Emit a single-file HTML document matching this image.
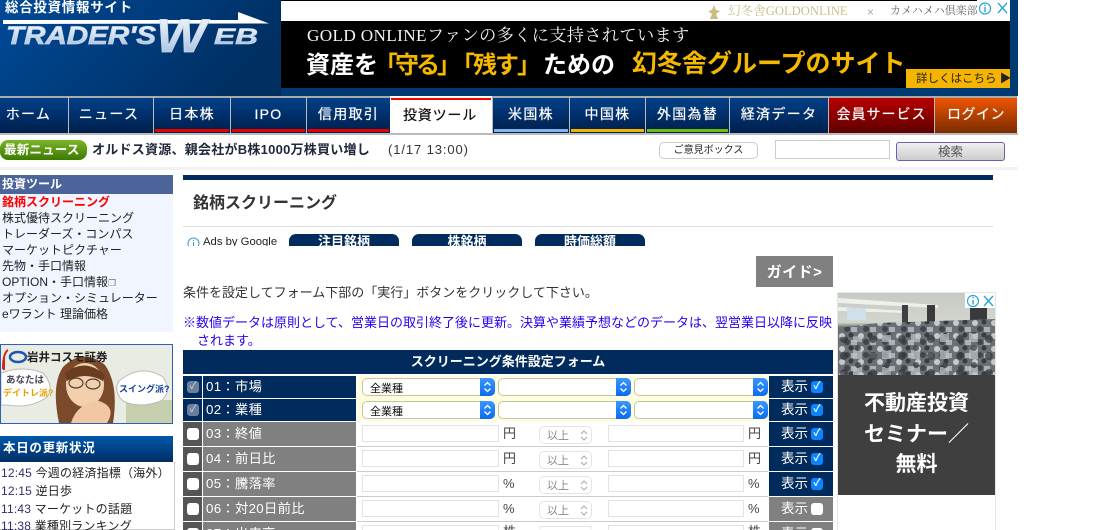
<!DOCTYPE html>
<html lang="ja"><head><meta charset="utf-8"><title>銘柄スクリーニング</title>
<style>
html,body{margin:0;padding:0;background:#fff;width:1095px;height:530px;overflow:hidden}
body{position:relative;font-family:"Liberation Sans","Noto Sans CJK JP",sans-serif;color:#222;font-size:12px}
div,span{position:absolute;white-space:nowrap;box-sizing:border-box}
.nav{top:96px;height:37px;background:linear-gradient(#004088,#001f4c);border-left:1px solid #bbb;border-top:2px solid #aaa;color:#fff;font-size:14px;text-align:center;line-height:32px;letter-spacing:1.3px;text-shadow:0 0 .6px #fff}
.nav i{position:absolute;left:1px;right:1px;bottom:1px;height:3px;display:block}
.side{left:2px;font-size:12px;line-height:16px;color:#222}
.navy{background:#002b5c;color:#fff}
.gray{background:#808080;color:#fff}
.cb{left:183px;width:19px;text-align:center}
.lab{left:203px;width:153px;font-size:13.3px;padding-left:3px;letter-spacing:.3px;padding-top:1px}
.sh{left:769px;width:64px;font-size:13.5px;padding-left:12px;padding-top:1px}
.box{width:12px;height:12px;border-radius:3px;background:#fff}
.chk{left:811px;width:12px;height:12px;border-radius:3px;background:#0a84ff;color:#fff;font-size:10px;line-height:12px;text-align:center;font-weight:bold}
.sel{height:18px;background:#fff;border:1px solid #c8c49a;border-radius:5px;font-size:11px;line-height:20px;padding-left:7px;color:#111}
.sel b{position:absolute;right:-1px;top:-1px;width:15px;height:18px;background:linear-gradient(#3a97ff,#0a6cf0);border-radius:0 5px 5px 0;display:block}
.sel svg,.up svg{position:absolute;left:0;top:0}
.inp{height:17px;background:#fff;border:1px solid #e2e2e2}
.u{font-size:13px;color:#444}
.up{width:53px;height:18px;border:1px solid #e4e4e4;border-radius:5px;font-size:11px;color:#888;line-height:19px;padding-left:7px;background:#fff}
.up svg{left:38px}
.tb{top:234px;height:12px;width:110px;background:#002b5c;border-radius:7px 7px 0 0;color:#fff;font-size:13px;font-weight:bold;text-align:center;overflow:hidden;line-height:15px}
.upd{left:1px;font-size:12px;line-height:16px;color:#222;letter-spacing:.2px}
.upd em{font-style:normal;color:#303068}
</style></head><body>

<!-- header -->
<div style="left:0;top:0;width:1018px;height:96px;background:#003a72"></div>
<div style="left:0;top:0;width:281px;height:96px;background:linear-gradient(135deg,#004a98,#002f62 85%)"></div>
<div style="left:5px;top:-2px;font-size:13.5px;font-weight:bold;color:#fff;letter-spacing:.7px;line-height:20px">総合投資情報サイト</div>
<svg style="position:absolute;left:0;top:0" width="280" height="60">
<defs><linearGradient id="lg" x1="0" y1="0" x2="0" y2="1"><stop offset="0" stop-color="#fff"/><stop offset="1" stop-color="#9db8dd"/></linearGradient></defs>
<path d="M3 20H238V12L269 23.5L3 24Z" fill="#fff"/>
<text x="6" y="44" font-family="Liberation Sans" font-size="25" font-weight="bold" font-style="italic" fill="url(#lg)" stroke="#c6d6ec" stroke-width=".8" textLength="150" lengthAdjust="spacingAndGlyphs">TRADER'S</text>
<text x="156" y="52" font-family="Liberation Sans" font-size="47" font-weight="bold" font-style="italic" fill="url(#lg)" stroke="#c6d6ec" stroke-width=".8" textLength="50" lengthAdjust="spacingAndGlyphs">W</text>
<text x="214" y="44" font-family="Liberation Sans" font-size="22" font-weight="bold" font-style="italic" fill="url(#lg)" stroke="#c6d6ec" stroke-width=".6" textLength="44" lengthAdjust="spacingAndGlyphs">EB</text>
</svg>

<!-- top ad -->
<div style="left:281px;top:0;width:729px;height:88px;background:#000"></div>
<div style="left:281px;top:1px;width:729px;height:20px;background:#fff"></div>
<svg style="position:absolute;left:705px;top:4px" width="18" height="18"><path d="M9 1L11 6L15 7L11 10L13 15H5L7 10L3 7L7 6Z" fill="#c8bd82"/></svg>
<div style="left:728px;top:3px;font-size:12.6px;line-height:16px;color:#c9c08c;font-family:'Liberation Serif','Noto Serif CJK SC',serif">幻冬舎GOLDONLINE</div>
<div style="left:867px;top:4px;font-size:12px;line-height:16px;color:#aaa">×</div>
<div style="left:890px;top:4px;font-size:11px;line-height:15px;color:#666;font-family:'Liberation Serif','Noto Serif CJK SC',serif">カメハメハ倶楽部</div>
<div style="left:977px;top:0;width:33px;height:16px;background:#fff"></div>
<svg style="position:absolute;left:978px;top:1px" width="32" height="15"><circle cx="7" cy="7.5" r="5.5" fill="none" stroke="#2aa6dd" stroke-width="1.2"/><path d="M7 6V11M7 3.500V5" stroke="#2aa6dd" stroke-width="1.4"/><path d="M20 2L29 12M29 2L20 12" stroke="#2aa6dd" stroke-width="1.4"/></svg>
<div style="left:307px;top:25px;font-size:17.2px;line-height:22px;color:#f4f4f4;font-family:'Liberation Serif','Noto Serif CJK SC',serif;letter-spacing:.35px">GOLD ONLINEファンの多くに支持されています</div>
<div style="left:306px;top:50px;font-size:24px;line-height:32px;font-weight:bold;color:#fff">資産を</div>
<div style="left:374px;top:50px;font-size:24px;line-height:32px;font-weight:bold;color:#f5b800;letter-spacing:-3px">「守る」</div>
<div style="left:451px;top:50px;font-size:24px;line-height:32px;font-weight:bold;color:#f5b800;letter-spacing:-2px">「残す」</div>
<div style="left:543px;top:50px;font-size:24px;line-height:32px;font-weight:bold;color:#fff">ための</div>
<div style="left:632px;top:47px;font-size:25px;line-height:34px;font-weight:bold;color:#f5b800">幻冬舎グループのサイト</div>
<div style="left:906px;top:69px;width:104px;height:19px;background:#f5b400;color:#222;font-size:11.5px;line-height:20px;padding-left:10px">詳しくはこちら ▶</div>

<!-- nav -->
<div style="left:0;top:133px;width:1018px;height:2px;background:#bbb"></div>
<div class="nav" style="left:0;width:68px;border-left:0;padding-right:11px">ホーム</div>
<div class="nav" style="left:68px;width:85px;padding-right:4px">ニュース</div>
<div class="nav" style="left:153px;width:77px">日本株<i style="background:#e60000"></i></div>
<div class="nav" style="left:230px;width:76px">IPO<i style="background:#e60000"></i></div>
<div class="nav" style="left:306px;width:84px">信用取引<i style="background:#e60000"></i></div>
<div style="left:391px;top:98px;width:100px;height:2px;background:#f00"></div>
<div style="left:390px;top:104px;width:100px;text-align:center;font-size:14px;line-height:22px;color:#111;letter-spacing:.8px;text-shadow:0 0 .5px #111">投資ツール</div>
<div class="nav" style="left:492px;width:77px">米国株<i style="background:#7db7ee"></i></div>
<div class="nav" style="left:569px;width:76px">中国株<i style="background:#f3b400"></i></div>
<div class="nav" style="left:645px;width:84px">外国為替<i style="background:#6fbe10"></i></div>
<div class="nav" style="left:729px;width:99px">経済データ</div>
<div class="nav" style="left:828px;width:106px;background:linear-gradient(#b80000,#5e0000);letter-spacing:1px">会員サービス</div>
<div class="nav" style="left:934px;width:83px;background:linear-gradient(#ee5500,#7a2c00);letter-spacing:.5px">ログイン</div>

<!-- news bar -->
<div style="left:0;top:140px;width:87px;height:20px;border-radius:8px;background:linear-gradient(#7cb52a,#3b7a00);color:#fff;font-size:12.5px;font-weight:bold;line-height:20px;padding-left:4px;letter-spacing:.2px">最新ニュース</div>
<div style="left:92px;top:140px;font-size:13px;line-height:19px;font-weight:bold;color:#20283a;letter-spacing:.25px">オルドス資源、親会社がB株1000万株買い増し</div>
<div style="left:388px;top:140px;font-size:13px;line-height:19px;color:#333;letter-spacing:.9px">(1/17 13:00)</div>
<div style="left:659px;top:142px;width:99px;height:17px;border:1px solid #ccc;border-radius:5px;font-size:10px;line-height:16px;text-align:center;color:#222;background:#fff">ご意見ボックス</div>
<div style="left:775px;top:140px;width:115px;height:19px;border:1px solid #ccc;background:#fff"></div>
<div style="left:896px;top:142px;width:109px;height:19px;border:1px solid #6a5fb0;border-radius:3px;background:linear-gradient(#f0f0f0,#ccc);font-size:12.5px;line-height:19px;text-align:center;color:#555">検索</div>
<div style="left:0;top:167px;width:1018px;height:3px;background:#f2f2f2"></div>

<!-- sidebar -->
<div style="left:0;top:175px;width:173px;height:157px;background:#f1f5ff"></div>
<div style="left:0;top:175px;width:173px;height:19px;background:#4b6499;color:#fff;font-size:12px;font-weight:bold;line-height:19px;padding-left:2px">投資ツール</div>
<div class="side" style="top:194px;color:#f00;font-weight:bold">銘柄スクリーニング</div>
<div class="side" style="top:210px">株式優待スクリーニング</div>
<div class="side" style="top:226px">トレーダーズ・コンパス</div>
<div class="side" style="top:242px">マーケットピクチャー</div>
<div class="side" style="top:258px">先物・手口情報</div>
<div class="side" style="top:274px">OPTION・手口情報<span style="position:static;font-size:9px;color:#777">❐</span></div>
<div class="side" style="top:290px">オプション・シミュレーター</div>
<div class="side" style="top:306px">eワラント 理論価格</div>

<!-- broker banner -->
<div style="left:0;top:344px;width:173px;height:80px;background:linear-gradient(#eef0ea,#dfe5d8);border:1px solid #2b62b5;overflow:hidden"></div>
<svg style="position:absolute;left:1px;top:345px" width="171" height="78">
<rect x="0" y="0" width="171" height="78" fill="#e9ece3"/>
<rect x="125" y="55" width="46" height="23" fill="#c5cfae"/>
<path d="M58 78Q50 40 62 22Q82 2 104 20Q118 40 112 78Z" fill="#7a4a2a"/>
<ellipse cx="84" cy="40" rx="19" ry="22" fill="#f4cfae"/>
<path d="M64 28Q84 12 104 30L102 36Q84 26 66 36Z" fill="#6b3d20"/>
<path d="M70 78Q76 58 98 56Q116 62 106 78Z" fill="#f2c8a4"/>
<ellipse cx="75" cy="38" rx="7" ry="5" fill="none" stroke="#443" stroke-width="1.2"/><ellipse cx="92" cy="39" rx="7" ry="5" fill="none" stroke="#443" stroke-width="1.2"/>
<path d="M0 28Q22 20 42 28Q54 42 46 52Q30 64 6 60L0 60Z" fill="#fff" stroke="#bbb"/>
<path d="M118 36Q140 18 162 32Q172 46 160 56Q138 64 122 56Q112 46 118 36Z" fill="#fff" stroke="#bbb"/>
<path d="M2 24Q2 8 7 5M3 12V25" stroke="#d8201c" stroke-width="2" fill="none"/>
<ellipse cx="17" cy="12" rx="8" ry="5" stroke="#1f55b0" stroke-width="2.500" fill="none"/>
</svg>
<div style="left:27px;top:350px;font-size:11.5px;line-height:16px;font-weight:bold;color:#222">岩井コスモ証券</div>
<div style="left:6px;top:375px;font-size:9.5px;line-height:12px;font-weight:bold;color:#445">あなたは</div>
<div style="left:3px;top:387px;font-size:9px;line-height:12px;font-weight:bold;color:#e8a000">デイトレ派?</div>
<div style="left:119px;top:383px;font-size:9px;line-height:12px;font-weight:bold;color:#14409a">スイング派?</div>

<!-- updates -->
<div style="left:0;top:436px;width:173px;height:26px;background:linear-gradient(#0058ad,#002e62);color:#fff;font-size:12.5px;font-weight:bold;line-height:24px;padding-left:3px;letter-spacing:.7px">本日の更新状況</div>
<div style="left:0;top:462px;width:175px;height:68px;border:1px solid #ccc;border-top:0;border-left:0"></div>
<div class="upd" style="top:465px"><em>12:45</em> 今週の経済指標（海外）</div>
<div class="upd" style="top:483px"><em>12:15</em> 逆日歩</div>
<div class="upd" style="top:501px"><em>11:43</em> マーケットの話題</div>
<div class="upd" style="top:518px"><em>11:38</em> 業種別ランキング</div>

<!-- main head -->
<div style="left:183px;top:175px;width:810px;height:5px;background:#002b5c"></div>
<div style="left:193px;top:193px;font-size:16px;line-height:22px;font-weight:bold;color:#333">銘柄スクリーニング</div>
<div style="left:183px;top:226px;width:810px;height:1px;background:#ddd"></div>
<svg style="position:absolute;left:187px;top:237px" width="14" height="9"><circle cx="6.5" cy="6.5" r="5.5" fill="none" stroke="#3a9bd0"/><path d="M6.500 5V9M6.500 3V4" stroke="#3a9bd0"/></svg>
<div style="left:203px;top:235px;height:11px;overflow:hidden;font-size:11.3px;line-height:14px;color:#222">Ads by Google</div>
<div class="tb" style="left:289px">注目銘柄</div>
<div class="tb" style="left:412px">株銘柄</div>
<div class="tb" style="left:535px">時価総額</div>
<div style="left:756px;top:256px;width:77px;height:31px;background:#808080;color:#fff;font-size:15px;font-weight:bold;line-height:31px;padding-top:1px;text-align:center;letter-spacing:.5px">ガイド&gt;</div>
<div style="left:183px;top:284px;font-size:13px;line-height:18px;color:#333">条件を設定してフォーム下部の「実行」ボタンをクリックして下さい。</div>
<div style="left:183px;top:313px;font-size:13px;line-height:19px;color:#2a00ee">※数値データは原則として、営業日の取引終了後に更新。決算や業績予想などのデータは、翌営業日以降に反映</div>
<div style="left:197px;top:332px;font-size:13px;line-height:18px;color:#2a00ee">されます。</div>

<!-- table -->
<div class="navy" style="left:183px;top:350px;width:650px;height:24px;font-size:13px;font-weight:bold;line-height:23px;text-align:center">スクリーニング条件設定フォーム</div>

<div style="left:357px;top:376px;width:411px;height:45px;background:#fffde0"></div>

<div class="cb navy" style="top:376px;height:22px"></div><div class="box" style="left:187px;top:381px;background:#6b7f9c;color:#d7dfe9;font-size:10px;line-height:12px;text-align:center">✓</div>
<div class="lab navy" style="top:376px;height:22px;line-height:20px">01：市場</div>
<div class="sel" style="left:362px;top:378px;width:133px">全業種<b><svg width="15" height="18"><path d="M4.500 7.500L7.500 4.500L10.500 7.500M4.500 10.500L7.500 13.500L10.500 10.500" fill="none" stroke="#fff" stroke-width="1.300"/></svg></b></div>
<div class="sel" style="left:498px;top:378px;width:133px"><b><svg width="15" height="18"><path d="M4.500 7.500L7.500 4.500L10.500 7.500M4.500 10.500L7.500 13.500L10.500 10.500" fill="none" stroke="#fff" stroke-width="1.300"/></svg></b></div>
<div class="sel" style="left:634px;top:378px;width:134px"><b><svg width="15" height="18"><path d="M4.500 7.500L7.500 4.500L10.500 7.500M4.500 10.500L7.500 13.500L10.500 10.500" fill="none" stroke="#fff" stroke-width="1.300"/></svg></b></div>
<div class="sh navy" style="top:376px;height:22px;line-height:20px">表示</div><div class="chk" style="top:381px">✓</div>

<div class="cb navy" style="top:399px;height:22px"></div><div class="box" style="left:187px;top:404px;background:#6b7f9c;color:#d7dfe9;font-size:10px;line-height:12px;text-align:center">✓</div>
<div class="lab navy" style="top:399px;height:22px;line-height:20px">02：業種</div>
<div class="sel" style="left:362px;top:401px;width:133px">全業種<b><svg width="15" height="18"><path d="M4.500 7.500L7.500 4.500L10.500 7.500M4.500 10.500L7.500 13.500L10.500 10.500" fill="none" stroke="#fff" stroke-width="1.300"/></svg></b></div>
<div class="sel" style="left:498px;top:401px;width:133px"><b><svg width="15" height="18"><path d="M4.500 7.500L7.500 4.500L10.500 7.500M4.500 10.500L7.500 13.500L10.500 10.500" fill="none" stroke="#fff" stroke-width="1.300"/></svg></b></div>
<div class="sel" style="left:634px;top:401px;width:134px"><b><svg width="15" height="18"><path d="M4.500 7.500L7.500 4.500L10.500 7.500M4.500 10.500L7.500 13.500L10.500 10.500" fill="none" stroke="#fff" stroke-width="1.300"/></svg></b></div>
<div class="sh navy" style="top:399px;height:22px;line-height:20px">表示</div><div class="chk" style="top:404px">✓</div>

<div style="left:357px;top:446px;width:411px;height:1px;background:#ccc"></div>
<div style="left:357px;top:471px;width:411px;height:1px;background:#ccc"></div>
<div style="left:357px;top:496px;width:411px;height:1px;background:#ccc"></div>
<div style="left:357px;top:521px;width:411px;height:1px;background:#ccc"></div>

<div class="cb" style="top:422px;height:24px;background:#555"></div><div class="box" style="left:187px;top:428px"></div>
<div class="lab gray" style="top:422px;height:24px;line-height:22px">03：終値</div>
<div class="inp" style="left:362px;top:425px;width:137px"></div><div class="u" style="left:503px;top:425px;line-height:17px">円</div>
<div class="up" style="left:539px;top:426px">以上<svg width="13" height="18"><path d="M3 7L6 4L9 7M3 10L6 13L9 10" fill="none" stroke="#aaa"/></svg></div>
<div class="inp" style="left:608px;top:425px;width:136px"></div><div class="u" style="left:748px;top:425px;line-height:17px">円</div>
<div class="sh navy" style="top:422px;height:24px;line-height:22px">表示</div><div class="chk" style="top:428px">✓</div>

<div class="cb" style="top:447px;height:24px;background:#555"></div><div class="box" style="left:187px;top:453px"></div>
<div class="lab gray" style="top:447px;height:24px;line-height:22px">04：前日比</div>
<div class="inp" style="left:362px;top:450px;width:137px"></div><div class="u" style="left:503px;top:450px;line-height:17px">円</div>
<div class="up" style="left:539px;top:451px">以上<svg width="13" height="18"><path d="M3 7L6 4L9 7M3 10L6 13L9 10" fill="none" stroke="#aaa"/></svg></div>
<div class="inp" style="left:608px;top:450px;width:136px"></div><div class="u" style="left:748px;top:450px;line-height:17px">円</div>
<div class="sh navy" style="top:447px;height:24px;line-height:22px">表示</div><div class="chk" style="top:453px">✓</div>

<div class="cb" style="top:472px;height:24px;background:#555"></div><div class="box" style="left:187px;top:478px"></div>
<div class="lab gray" style="top:472px;height:24px;line-height:22px">05：騰落率</div>
<div class="inp" style="left:362px;top:475px;width:137px"></div><div class="u" style="left:503px;top:475px;line-height:17px">%</div>
<div class="up" style="left:539px;top:476px">以上<svg width="13" height="18"><path d="M3 7L6 4L9 7M3 10L6 13L9 10" fill="none" stroke="#aaa"/></svg></div>
<div class="inp" style="left:608px;top:475px;width:136px"></div><div class="u" style="left:748px;top:475px;line-height:17px">%</div>
<div class="sh navy" style="top:472px;height:24px;line-height:22px">表示</div><div class="chk" style="top:478px">✓</div>

<div class="cb" style="top:497px;height:24px;background:#555"></div><div class="box" style="left:187px;top:503px"></div>
<div class="lab gray" style="top:497px;height:24px;line-height:22px">06：対20日前比</div>
<div class="inp" style="left:362px;top:500px;width:137px"></div><div class="u" style="left:503px;top:500px;line-height:17px">%</div>
<div class="up" style="left:539px;top:501px">以上<svg width="13" height="18"><path d="M3 7L6 4L9 7M3 10L6 13L9 10" fill="none" stroke="#aaa"/></svg></div>
<div class="inp" style="left:608px;top:500px;width:136px"></div><div class="u" style="left:748px;top:500px;line-height:17px">%</div>
<div class="sh gray" style="top:497px;height:24px;line-height:22px">表示</div><div class="box" style="left:811px;top:503px"></div>

<div class="cb" style="top:522px;height:8px;background:#555"></div><div class="box" style="left:187px;top:528px"></div>
<div class="lab gray" style="top:522px;height:8px;line-height:22px;overflow:hidden">07：出来高</div>
<div class="inp" style="left:362px;top:525px;width:137px;height:5px;border-bottom:0"></div><div class="u" style="left:503px;top:522px;height:8px;overflow:hidden;line-height:20px">株</div>
<div class="up" style="left:539px;top:526px;height:4px;border-bottom:0"></div>
<div class="inp" style="left:608px;top:525px;width:136px;height:5px;border-bottom:0"></div><div class="u" style="left:748px;top:522px;height:8px;overflow:hidden;line-height:20px">株</div>
<div class="sh gray" style="top:522px;height:8px;line-height:22px;overflow:hidden">表示</div><div class="box" style="left:811px;top:528px"></div>

<!-- right ad -->
<div style="left:837px;top:292px;width:159px;height:238px;border:1px solid #e6e6e6;border-bottom:0;background:#fff"></div>
<svg style="position:absolute;left:838px;top:293px" width="157" height="82">
<defs>
<linearGradient id="wall" x1="0" y1="0" x2="0" y2="1"><stop offset="0" stop-color="#c4cac4"/><stop offset=".36" stop-color="#d3d6cd"/><stop offset=".42" stop-color="#6a7072"/><stop offset="1" stop-color="#5a626a"/></linearGradient>
<pattern id="cr1" width="19" height="13" patternUnits="userSpaceOnUse"><rect width="19" height="13" fill="#6a7074"/><circle cx="4" cy="4" r="3" fill="#c4c9ca"/><circle cx="13" cy="3" r="2.500" fill="#383b40"/><circle cx="9" cy="10" r="3" fill="#42454a"/><rect x="13" y="8" width="6" height="5" fill="#a9b2bb"/></pattern>
<pattern id="cr2" width="29" height="17" patternUnits="userSpaceOnUse"><circle cx="6" cy="12" r="4" fill="#34373c"/><rect x="15" y="6" width="9" height="9" fill="#bcc2c7"/><circle cx="20" cy="4" r="3" fill="#3a3c40"/></pattern>
</defs>
<rect width="157" height="82" fill="url(#wall)"/>
<path d="M0 5L100 12V15L0 10ZM0 14L70 18V20L0 18Z" fill="#eef0ea"/>
<rect x="9" y="15" width="19" height="12" fill="#cfe0ea"/>
<rect x="64" y="12" width="6" height="20" fill="#3e3f40"/><rect x="89" y="12" width="8" height="20" fill="#3a3a3c"/><rect x="132" y="7" width="17" height="28" fill="#3a3a3c"/>
<path d="M0 35L40 30L157 26V82H0Z" fill="url(#cr1)"/>
<path d="M0 44L157 38V82H0Z" fill="url(#cr2)" opacity=".7"/>
</svg>
<div style="left:965px;top:293px;width:30px;height:15px;background:#fff"></div>
<svg style="position:absolute;left:965px;top:293px" width="30" height="15"><circle cx="8" cy="8" r="5.5" fill="none" stroke="#2aa6dd" stroke-width="1.2"/><path d="M8 7V11.500M8 4V5.500" stroke="#2aa6dd" stroke-width="1.4"/><path d="M19 3L28 13M28 3L19 13" stroke="#2aa6dd" stroke-width="1.4"/></svg>
<div style="left:838px;top:375px;width:157px;height:120px;background:#3f3f3f"></div>
<div style="left:838px;top:388px;width:157px;text-align:center;font-size:21px;line-height:31px;font-weight:bold;color:#fff">不動産投資</div>
<div style="left:838px;top:419px;width:157px;text-align:center;font-size:21px;line-height:31px;font-weight:bold;color:#fff">セミナー／</div>
<div style="left:838px;top:449px;width:157px;text-align:center;font-size:21px;line-height:31px;font-weight:bold;color:#fff">無料</div>

</body></html>
